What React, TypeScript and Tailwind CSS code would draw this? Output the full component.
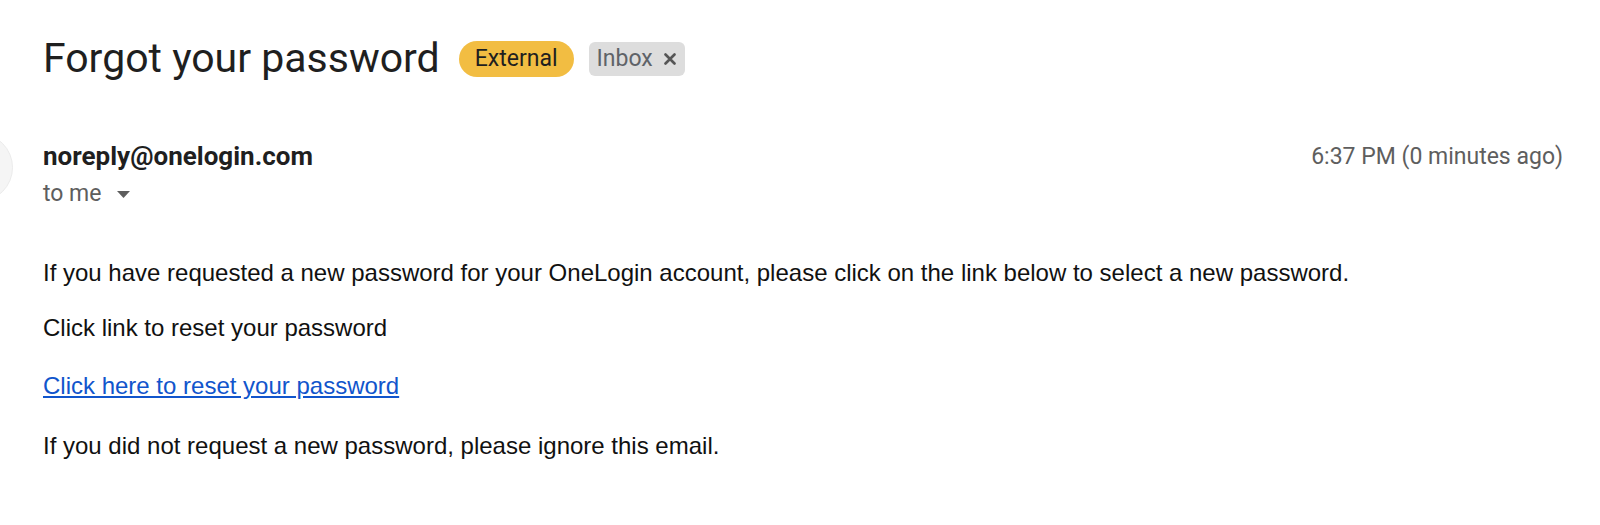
import React from 'react';

const App: React.FC = () => {
  return (
    <div className="w-[1600px] h-[525px] bg-white overflow-hidden font-['Roboto',sans-serif] text-[#1f1f1f]">
      {/* Subject line */}
      <div className="flex items-start pl-[43px] pt-[34px]">
        <h1 className="text-[41px] leading-[48px] font-normal text-[#1f1f1f]">Forgot your password</h1>
        <span className="ml-[19px] mt-[7px] h-[36px] px-[16px] flex items-center rounded-full bg-[#f2bd42] text-[23px] text-[#1f1f1f]">
          External
        </span>
        <span className="ml-[15px] mt-[8px] h-[34px] pl-[8px] pr-[9px] flex items-center rounded-[6px] bg-[#dddddd] text-[23px] text-[#5f6368]">
          Inbox
          <svg className="ml-[11px]" width="12" height="12" viewBox="0 0 12 12">
            <path d="M1.5 1.5l9 9M10.5 1.5l-9 9" stroke="#555555" strokeWidth="2.6" strokeLinecap="round" />
          </svg>
        </span>
      </div>

      {/* Sender row */}
      <div className="flex items-start mt-[51px]">
        <div className="shrink-0 w-[69px] h-[69px] rounded-full bg-[#f5f5f5] border border-[#ebebeb] -ml-[56px] mr-[30px]" />
        <div className="flex-1 flex justify-between pr-[37px]">
          <div className="pt-[7px]">
            <div className="text-[26px] leading-[32px] font-bold text-[#1f1f1f]">noreply@onelogin.com</div>
            <div className="flex items-center mt-[8px] text-[23px] leading-[28px] text-[#5e5e5e]">
              to me
              <svg className="ml-[15px] mt-[1px]" width="13" height="7" viewBox="0 0 13 7">
                <path d="M0 0h13L6.5 7z" fill="#5e5e5e" />
              </svg>
            </div>
          </div>
          <div className="pt-[10px] text-[23px] leading-[28px] text-[#5e5e5e]">6:37 PM (0 minutes ago)</div>
        </div>
      </div>

      {/* Body */}
      <div className="pl-[43px] mt-[51px] font-['Liberation_Sans',Arial,sans-serif] text-[24px] leading-[28px] text-[#111111]">
        <p>If you have requested a new password for your OneLogin account, please click on the link below to select a new password.</p>
        <p className="mt-[27px]">Click link to reset your password</p>
        <p className="mt-[30px]">
          <a href="#" className="text-[#1155cc] underline">Click here to reset your password</a>
        </p>
        <p className="mt-[32px]">If you did not request a new password, please ignore this email.</p>
      </div>
    </div>
  );
};

export default App;
